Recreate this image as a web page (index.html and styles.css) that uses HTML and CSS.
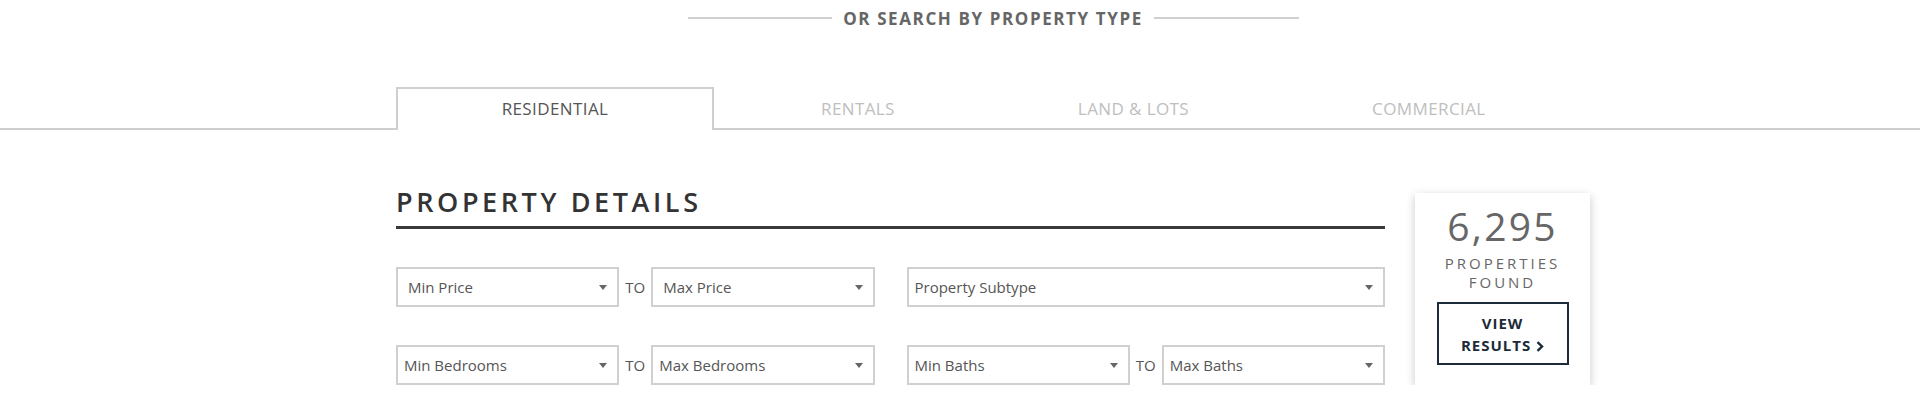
FILE: index.html
```html
<!DOCTYPE html>
<html lang="en">
<head>
<meta charset="utf-8">
<title>Property Search</title>
<link rel="stylesheet" href="styles.css">
</head>
<body>
  <div class="wrap">
    <div class="search-type">
      <span class="search-type__line"></span>
      <span class="search-type__label">OR SEARCH BY PROPERTY TYPE</span>
      <span class="search-type__line"></span>
    </div>
  </div>

  <div class="tabs-bar">
    <ul class="tabs wrap">
      <li class="tab tab--active">RESIDENTIAL</li>
      <li class="tab">RENTALS</li>
      <li class="tab">LAND &amp; LOTS</li>
      <li class="tab">COMMERCIAL</li>
    </ul>
  </div>

  <div class="content wrap">
    <main class="details">
      <h2 class="details__title">PROPERTY DETAILS</h2>
      <div class="filters">
        <div class="range">
          <div class="select select--wide"><span>Min Price</span><i class="caret"></i></div>
          <span class="range__to">TO</span>
          <div class="select select--wide"><span>Max Price</span><i class="caret"></i></div>
        </div>
        <div class="select"><span>Property Subtype</span><i class="caret"></i></div>
        <div class="range">
          <div class="select"><span>Min Bedrooms</span><i class="caret"></i></div>
          <span class="range__to">TO</span>
          <div class="select"><span>Max Bedrooms</span><i class="caret"></i></div>
        </div>
        <div class="range">
          <div class="select"><span>Min Baths</span><i class="caret"></i></div>
          <span class="range__to">TO</span>
          <div class="select"><span>Max Baths</span><i class="caret"></i></div>
        </div>
      </div>
    </main>

    <aside class="results">
      <div class="results__count">6,295</div>
      <div class="results__label">PROPERTIES<br>FOUND</div>
      <a class="results__btn" href="#">VIEW<br>RESULTS <svg class="chev" width="8" height="11" viewBox="0 0 8 11"><path d="M1.5 1.2 L6 5.5 L1.5 9.8" fill="none" stroke="#1c2b3a" stroke-width="2.4" stroke-linejoin="miter"/></svg></a>
    </aside>
  </div>
</body>
</html>
```

FILE: styles.css
```css
* { box-sizing: border-box; }

body {
  margin: 0;
  background: #fff;
  font-family: "Open Sans", "Liberation Sans", sans-serif;
  color: #555;
}

.wrap {
  width: 1194px;
  margin-left: 396px;
}

/* top divider */
.search-type {
  display: flex;
  align-items: center;
  gap: 11px;
  width: 611px;
  height: 36px;
  margin: 0 auto;
}
.search-type__line {
  flex: 1;
  height: 2px;
  background: #d0d0d0;
}
.search-type__label {
  font-size: 17px;
  font-weight: 700;
  letter-spacing: 1.6px;
  color: #666;
  white-space: nowrap;
}

/* tabs */
.tabs-bar {
  margin-top: 51px;
  border-bottom: 2px solid #cfcfcf;
}
.tabs {
  display: flex;
  list-style: none;
  padding: 0;
  margin-top: 0;
  margin-bottom: 0;
  height: 41px;
}
.tab {
  display: flex;
  align-items: center;
  justify-content: center;
  padding: 0 91.5px;
  font-size: 17px;
  letter-spacing: 0.4px;
  color: #bebebe;
  border-top: 2px solid transparent;
}
.tab--active {
  width: 318px;
  padding: 0 0 2px;
  color: #555;
  background: #fff;
  border: 2px solid #cfcfcf;
  border-bottom: none;
  height: 43px;
  margin-right: 15.5px;
}

/* content */
.content {
  display: flex;
  align-items: flex-start;
  gap: 30px;
}
.details {
  width: 989px;
  padding-top: 56px;
}
.details__title {
  margin: 0;
  font-size: 27px;
  line-height: 32px;
  font-weight: 600;
  letter-spacing: 3.6px;
  color: #333;
  padding-bottom: 8px;
  border-bottom: 3px solid #3a3a3a;
}

.filters {
  display: grid;
  grid-template-columns: 1fr 1fr;
  column-gap: 32px;
  row-gap: 38px;
  margin-top: 38px;
}
.range {
  display: grid;
  grid-template-columns: 1fr auto 1fr;
  align-items: center;
}
.range__to {
  font-size: 15px;
  color: #555;
  padding: 0 6px;
}
.select {
  height: 40px;
  border: 2px solid #d0d0d0;
  display: flex;
  align-items: center;
  justify-content: space-between;
  padding: 0 10px 0 6px;
  font-size: 15px;
  color: #555;
  background: #fff;
}
.select--wide { padding-left: 10px; }
.caret {
  width: 0;
  height: 0;
  border-left: 4px solid transparent;
  border-right: 4px solid transparent;
  border-top: 5px solid #666;
}

/* results box */
.results {
  width: 175px;
  margin-top: 63px;
  padding: 10px 0 20px;
  background: #fff;
  box-shadow: 0 3px 9px rgba(0, 0, 0, 0.22);
  text-align: center;
  color: #666;
}
.results__count {
  font-size: 39px;
  line-height: 46px;
  letter-spacing: 2.2px;
  color: #666;
}
.results__label {
  margin-top: 5px;
  font-size: 15px;
  line-height: 19px;
  letter-spacing: 3px;
  color: #666;
}
.results__btn {
  display: block;
  width: 132px;
  margin: 10px auto 0;
  padding: 8px 0 7px;
  border: 2px solid #1c2b3a;
  color: #1c2b3a;
  font-size: 15px;
  line-height: 22px;
  font-weight: 700;
  letter-spacing: 1px;
  text-decoration: none;
}
.chev {
  vertical-align: -1px;
}
```
